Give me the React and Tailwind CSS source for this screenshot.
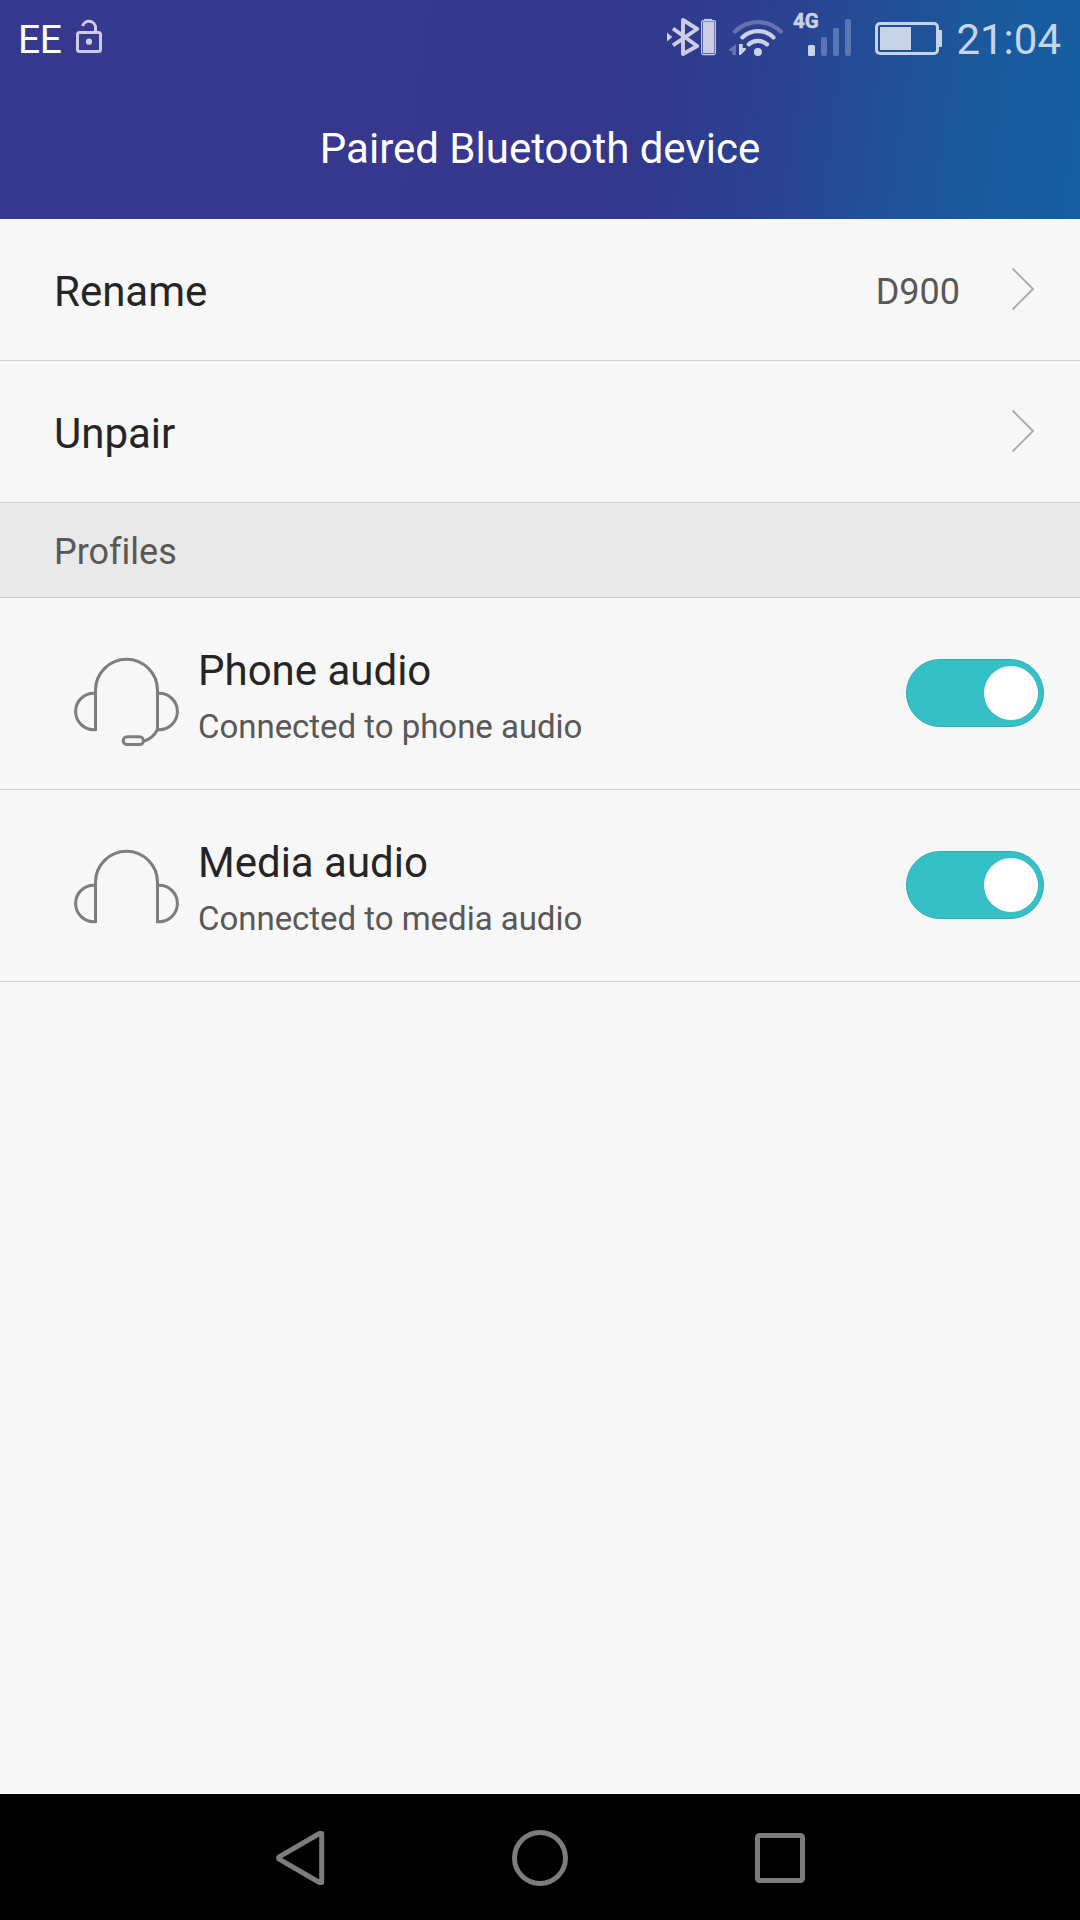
function LockIcon() {
  return (
    <svg width="28" height="36" viewBox="75 18 28 36" fill="none" stroke="#cccce4" strokeWidth="3">
      <rect x="77.5" y="32.5" width="23" height="19" rx="2" />
      <path d="M95.5 31V27.3a6.6 6.6 0 0 0-12.9-1.3" />
      <circle cx="89" cy="41.7" r="3.1" fill="#cccce4" stroke="none" />
    </svg>
  );
}

function BluetoothIcon() {
  return (
    <svg width="50" height="44" viewBox="667 15 50 44" fill="none" stroke="#cbcde4">
      <path d="M667 32.5l5.3 4.5-5.3 4.5z" fill="#cbcde4" stroke="none" />
      <path d="M673 28.5L697.2 46 683 54V20l14.2 9L673 45.3" strokeWidth="3.9" strokeLinejoin="round" />
      <rect x="701.6" y="20.6" width="13.8" height="34" rx="1.5" strokeWidth="1.1" />
      <path d="M704 19.6h8" strokeWidth="1.4" />
      <rect x="702.9" y="21.6" width="11.4" height="31.7" fill="#cbcde4" stroke="none" />
    </svg>
  );
}

function WifiIcon() {
  return (
    <svg width="56" height="44" viewBox="728 15 56 44" fill="none" stroke="#ccd1e5" strokeLinecap="round">
      <path d="M735 31.5a32.5 32.5 0 0 1 45.8 0" stroke="#6672ae" strokeWidth="4.2" />
      <path d="M742.3 37.4a22.5 22.5 0 0 1 31.2 0" strokeWidth="4.2" />
      <path d="M748.8 44.4a13.3 13.3 0 0 1 18.2 0" strokeWidth="4.2" />
      <circle cx="757.9" cy="52" r="4" fill="#ccd1e5" stroke="none" />
      <path d="M736 44v11h-3.7v-4H729v-1.6z" fill="#6672ae" stroke="none" />
      <path d="M739 55V44h3.7v4h3.3v1.6L740.7 55z" fill="#ccd1e5" stroke="none" />
    </svg>
  );
}

function SignalIcon() {
  return (
    <svg width="62" height="64" viewBox="791 3 62 64">
      <text x="793" y="28" fill="#ccd1e5" stroke="#ccd1e5" strokeWidth="0.5" fontFamily="Roboto" fontWeight="700" fontSize="20.5">4G</text>
      <rect x="808" y="45" width="7" height="11" rx="1.5" fill="#ccd4e7" />
      <rect x="821" y="37" width="6" height="19" rx="2" fill="#5a74b0" />
      <rect x="833" y="28" width="6" height="28" rx="2" fill="#5876b1" />
      <rect x="845" y="19" width="6" height="37" rx="2" fill="#5577b2" />
    </svg>
  );
}

function BatteryIcon() {
  return (
    <svg width="68" height="34" viewBox="875 22 68 34">
      <rect x="876.5" y="23.5" width="61" height="30" rx="3.5" fill="none" stroke="#c8d3e7" strokeWidth="3" />
      <rect x="880" y="27" width="31" height="23" fill="#c8d3e7" />
      <path d="M939 30h2a1 1 0 0 1 1 1v15a1 1 0 0 1-1 1h-2z" fill="#c8d3e7" />
    </svg>
  );
}

function Chevron() {
  return (
    <svg className="-translate-y-px" width="24" height="44" viewBox="0 0 24 44" fill="none" stroke="#aaaaaa" strokeWidth="1.9">
      <path d="M1.5 1.5L22 22 1.5 42.5" />
    </svg>
  );
}

function HeadphonesIcon({ mic }) {
  return (
    <svg width="112" height="100" viewBox="0 0 112 100" fill="none" stroke="#7d7d7d" strokeWidth="3">
      <path d="M25.5 79V38.3a31 31 0 0 1 62 0V79" />
      <path d="M25.5 41.3h-1.7a18.2 18.2 0 0 0 0 36.4h1.7M87.5 41.3h1.7a18.2 18.2 0 0 1 0 36.4h-1.7" />
      {mic && (
        <>
          <path d="M87.3 78C84 84 79 87.5 74 89.2" />
          <rect x="53.2" y="84.8" width="20.3" height="7.8" rx="3.9" />
        </>
      )}
    </svg>
  );
}

function ActionRow({ label, value }) {
  return (
    <div className="flex h-[142px] items-center border-b border-[#cfcfcf] pl-[54px] pr-[45px]">
      <span className="grow pt-[5px] text-[42px] leading-none text-[#252525]">{label}</span>
      {value && <span className="mr-[51px] pt-[5px] text-[36px] leading-none text-[#585858]">{value}</span>}
      <Chevron />
    </div>
  );
}

function ProfileRow({ title, detail, mic }) {
  return (
    <div className="flex h-48 items-center border-b border-[#cfcfcf] pl-[70px] pr-9">
      <div className="pt-[17px]">
        <HeadphonesIcon mic={mic} />
      </div>
      <div className="ml-4 flex grow flex-col gap-[17px] pt-[8px]">
        <span className="text-[42px] leading-[42px] text-[#252525]">{title}</span>
        <span className="text-[33px] leading-[36px] tracking-[-0.03px] text-[#585858]">{detail}</span>
      </div>
      <div className="flex h-[68px] w-[138px] -translate-y-px items-center justify-end rounded-full border border-[#30adb3] bg-[#35c0c5] pr-[5px]">
        <div className="size-[54px] rounded-full bg-white" />
      </div>
    </div>
  );
}

export default function App() {
  return (
    <div className="flex h-[1920px] w-[1080px] flex-col bg-[#f7f7f7] font-['Roboto',sans-serif] [font-variant-ligatures:none]">
      <header className="h-[219px] bg-[linear-gradient(98deg,#37398f_0%,#36378d_48%,#33388c_59%,#2b4191_71%,#1f5298_83%,#185b9e_92%,#165fa2_100%)]">
        <div className="flex h-[76px] items-center pl-[18px] pr-[17px]">
          <span className="pt-[5px] text-[39px] leading-none tracking-[-0.3px] text-white">EE</span>
          <div className="-mt-1 ml-[13px] grow">
            <LockIcon />
          </div>
          <div className="-mt-[2px]">
            <BluetoothIcon />
          </div>
          <div className="-mt-[2px] ml-[11px]">
            <WifiIcon />
          </div>
          <div className="-mt-[6px] ml-[7px]">
            <SignalIcon />
          </div>
          <div className="ml-[22px] mt-[2px]">
            <BatteryIcon />
          </div>
          <span className="ml-[13px] mr-[2px] pt-[3px] text-[42px] leading-none text-[#c6d5e8]">21:04</span>
        </div>
        <h1 className="pt-[52px] text-center text-[42px] leading-[42px] text-white">Paired Bluetooth device</h1>
      </header>
      <main className="grow">
        <ActionRow label="Rename" value="D900" />
        <ActionRow label="Unpair" />
        <div className="flex h-[95px] items-center border-b border-[#cfcfcf] bg-[#e9e9e9] pl-[54px] pt-[3px] text-[36px] leading-none text-[#585858]">
          Profiles
        </div>
        <ProfileRow title="Phone audio" detail="Connected to phone audio" mic />
        <ProfileRow title="Media audio" detail="Connected to media audio" />
      </main>
      <nav className="flex h-[126px] items-center justify-between bg-black px-[270px] pt-[2px]">
        <svg width="60" height="60" viewBox="270 1828 60 60" fill="none" stroke="#7d7d7d" strokeWidth="5" strokeLinejoin="round">
          <path d="M278.7 1857.2v1.6L319.5 1882.5h2.2v-49h-2.2z" />
        </svg>
        <svg width="60" height="60" viewBox="0 0 60 60" fill="none" stroke="#7d7d7d" strokeWidth="5">
          <circle cx="30" cy="30" r="25.5" />
        </svg>
        <svg width="60" height="60" viewBox="0 0 60 60" fill="none" stroke="#7d7d7d" strokeWidth="5">
          <rect x="7.5" y="7.5" width="45" height="45" rx="2" />
        </svg>
      </nav>
    </div>
  );
}
